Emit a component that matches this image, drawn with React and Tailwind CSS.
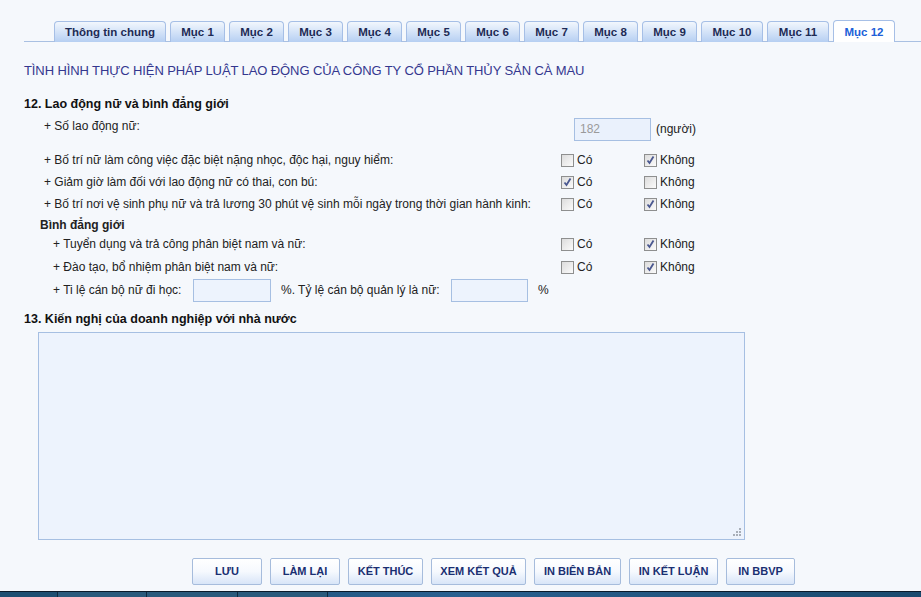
import React from 'react';

const tabs = [
    ['Thông tin chung', 112],
    ['Mục 1', 55], ['Mục 2', 55], ['Mục 3', 55], ['Mục 4', 55], ['Mục 5', 55],
    ['Mục 6', 55], ['Mục 7', 55], ['Mục 8', 55], ['Mục 9', 55],
    ['Mục 10', 62], ['Mục 11', 62], ['Mục 12', 62],
];

const buttons = [
    ['LƯU', 70], ['LÀM LẠI', 70], ['KẾT THÚC', 75], ['XEM KẾT QUẢ', 95],
    ['IN BIÊN BẢN', 87], ['IN KẾT LUẬN', 89], ['IN BBVP', 69],
];

function Check({ checked }) {
    return (
        <span className="inline-flex w-[13px] h-[13px] border border-[#8e8f8f] bg-gradient-to-br from-[#dcdcdc] to-[#fbfbfb] items-center justify-center shrink-0">
            {checked && (
                <svg width="11" height="11" viewBox="0 0 11 11">
                    <path d="M2.5 5.5 L4.5 8 L8.5 1.5" fill="none" stroke="#4a5890" strokeWidth="1.8" />
                </svg>
            )}
        </span>
    );
}

function YesNo({ yes }) {
    return (
        <div className="flex items-center">
            <div className="flex items-center gap-[3px] w-[83px]">
                <Check checked={yes} />
                <span>Có</span>
            </div>
            <div className="flex items-center gap-[3px]">
                <Check checked={!yes} />
                <span>Không</span>
            </div>
        </div>
    );
}

function Row({ label, yes, indent }) {
    return (
        <div className={`flex items-center ${indent ? 'h-[23px]' : 'h-[22px]'}`}>
            <div className={indent ? 'w-[508px] pl-[53px]' : 'w-[517px] pl-[44px]'} style={{ boxSizing: 'content-box' }}>{label}</div>
            <YesNo yes={yes} />
        </div>
    );
}

export default function App() {
    return (
        <div className="w-[921px] h-[597px] bg-[#f5f8fc] text-[12px] leading-[15px] text-[#222] flex flex-col overflow-hidden" style={{ fontFamily: '"Liberation Sans", Arial, sans-serif' }}>
            <div className="ml-[24px] mt-[20px] border-b border-[#a9c0e2] flex items-end pl-[30px] gap-[4px] h-[22px]">
                {tabs.map(([name, w]) => {
                    const active = name === 'Mục 12';
                    return (
                        <div key={name} style={{ width: w }} className={`mb-[-1px] pt-[1px] rounded-t-[4px] border border-b-0 border-[#a6bfe6] flex items-center justify-center font-bold text-[11.5px] ${active ? 'bg-white text-[#2060d8] h-[22px]' : 'h-[21px] bg-gradient-to-b from-[#f2f7fd] to-[#b6cff2] text-[#1e2b55]'}`}>
                            {name}
                        </div>
                    );
                })}
            </div>

            <div className="ml-[24px] mt-[21px] h-[16px] text-[13px] leading-[16px] text-[#34378f] tracking-[-0.1px]">
                TÌNH HÌNH THỰC HIỆN PHÁP LUẬT LAO ĐỘNG CỦA CÔNG TY CỔ PHẦN THỦY SẢN CÀ MAU
            </div>

            <div className="ml-[24px] mt-[17px] h-[16px] leading-[16px] font-bold text-[12.5px] text-[#111]">12. Lao động nữ và bình đẳng giới</div>

            <div className="flex items-center mt-[5px] h-[25px]">
                <div className="w-[530px] pl-[44px] self-start mt-[2px]" style={{ boxSizing: 'content-box' }}>+ Số lao động nữ:</div>
                <div className="w-[77px] h-[23px] border border-[#a6bfe2] bg-[#eaf1fc] text-[#9a9a9a] px-[5px] flex items-center">182</div>
                <div className="ml-[5px]">(người)</div>
            </div>

            <div className="mt-[7px]" />
            <Row label="+ Bố trí nữ làm công việc đặc biệt nặng nhọc, độc hại, nguy hiểm:" yes={false} />
            <Row label="+ Giảm giờ làm đối với lao động nữ có thai, con bú:" yes={true} />
            <Row label="+ Bố trí nơi vệ sinh phụ nữ và trả lương 30 phút vệ sinh mỗi ngày trong thời gian hành kinh:" yes={false} />

            <div className="ml-[40px] mt-[2px] font-bold h-[16px] leading-[17px]">Bình đẳng giới</div>
            <Row indent label="+ Tuyển dụng và trả công phân biệt nam và nữ:" yes={false} />
            <Row indent label="+ Đào tạo, bổ nhiệm phân biệt nam và nữ:" yes={false} />

            <div className="flex items-center h-[22px]">
                <div className="pl-[53px] w-[193px]" style={{ boxSizing: 'border-box' }}>+ Ti lệ cán bộ nữ đi học:</div>
                <div className="w-[78px] h-[23px] border border-[#a6bfe2] bg-[#edf3fd]"></div>
                <div className="ml-[10px] w-[170px]">%. Tỷ lệ cán bộ quản lý là nữ:</div>
                <div className="w-[77px] h-[23px] border border-[#a6bfe2] bg-[#edf3fd]"></div>
                <div className="ml-[10px]">%</div>
            </div>

            <div className="ml-[24px] mt-[10px] h-[16px] leading-[16px] font-bold text-[12.5px] text-[#111]">13. Kiến nghị của doanh nghiệp với nhà nước</div>

            <div className="ml-[38px] mt-[5px] w-[707px] h-[208px] border border-[#a6bfe2] bg-[#edf3fd] relative">
                <svg className="absolute right-[3px] bottom-[3px]" width="10" height="10" viewBox="0 0 10 10">
                    <rect x="8" y="2" width="2" height="2" fill="#a8aeb8" />
                    <rect x="5" y="5" width="2" height="2" fill="#a8aeb8" />
                    <rect x="8" y="5" width="2" height="2" fill="#a8aeb8" />
                    <rect x="2" y="8" width="2" height="2" fill="#a8aeb8" />
                    <rect x="5" y="8" width="2" height="2" fill="#a8aeb8" />
                    <rect x="8" y="8" width="2" height="2" fill="#a8aeb8" />
                </svg>
            </div>

            <div className="flex ml-[192px] mt-[18px] gap-[8px]">
                {buttons.map(([b, w]) => (
                    <div key={b} style={{ width: w }} className="h-[27px] rounded-[2px] border border-[#a6bcdc] bg-gradient-to-b from-white via-[#f6f9fe] to-[#d8e5f8] flex items-center justify-center font-bold text-[11px] text-[#1a2f72]">
                        {b}
                    </div>
                ))}
            </div>

            <div className="mt-auto h-[6px] flex border-t border-[#0a1a2a] bg-gradient-to-r from-[#1a4a6e] via-[#2a6090] to-[#1a4a6e]">
                <div className="w-[57px] bg-[#1d4f72]"></div>
                <div className="w-[90px] border-l border-r border-[#0e2a40] bg-[#2a5a7c]"></div>
                <div className="w-[91px] border-r border-[#0e2a40] bg-[#2a5a7c]"></div>
                <div className="w-[90px] border-r border-[#0e2a40] bg-[#2a5a7c]"></div>
            </div>
        </div>
    );
}
